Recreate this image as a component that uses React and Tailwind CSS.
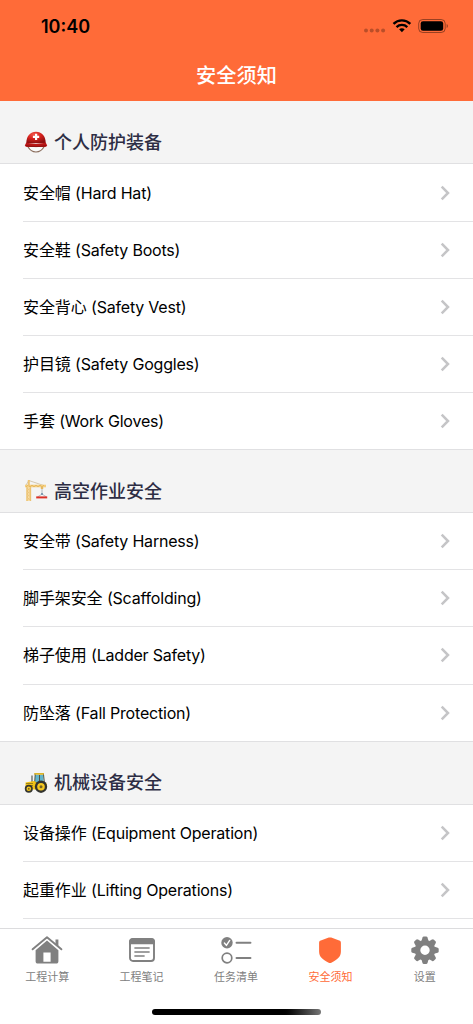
const sections = [
  {
    title: '个人防护装备',
    icon: HelmetIcon,
    items: [
      ['安全帽', '(Hard Hat)'],
      ['安全鞋', '(Safety Boots)'],
      ['安全背心', '(Safety Vest)'],
      ['护目镜', '(Safety Goggles)'],
      ['手套', '(Work Gloves)'],
    ],
  },
  {
    title: '高空作业安全',
    icon: CraneIcon,
    items: [
      ['安全带', '(Safety Harness)'],
      ['脚手架安全', '(Scaffolding)'],
      ['梯子使用', '(Ladder Safety)'],
      ['防坠落', '(Fall Protection)'],
    ],
  },
  {
    title: '机械设备安全',
    icon: TractorIcon,
    continues: true,
    items: [
      ['设备操作', '(Equipment Operation)'],
      ['起重作业', '(Lifting Operations)'],
    ],
  },
];

const tabs = [
  { label: '工程计算', icon: HomeIcon },
  { label: '工程笔记', icon: NoteIcon },
  { label: '任务清单', icon: ChecklistIcon },
  { label: '安全须知', icon: ShieldIcon, active: true },
  { label: '设置', icon: GearIcon },
];

function HelmetIcon() {
  return (
    <svg width="24" height="24" viewBox="0 0 24 24">
      <defs>
        <radialGradient id="helmet" cx="0.4" cy="0.25" r="0.75">
          <stop offset="0" stopColor="#f2564a" />
          <stop offset="0.5" stopColor="#d4201c" />
          <stop offset="1" stopColor="#8f0f10" />
        </radialGradient>
      </defs>
      <path d="M3.800 16.500C6 20.500 9 22 12 22s6-1.500 8.200-5.500" fill="#fafafa" stroke="#8a6d5c" strokeWidth="1.200" />
      <path d="M2.300 13C2.300 6 6.500 1.800 12 1.800S21.700 6 21.700 13z" fill="url(#helmet)" />
      <path d="M2.300 12.500C7 14 17 14 21.700 12.500L23.200 15.400C22.500 17 20 17 18 17H6C4 17 1.500 17 .8 15.400z" fill="#b81616" />
      <path d="M2 15.500C8 17 16 17 22 15.500" fill="none" stroke="#7d1010" strokeWidth=".7" />
      <path d="M11 3.800h2.200v2h2v2.100h-2v2.200H11V7.900H8.900V5.800H11z" fill="#fff" />
    </svg>
  );
}

function CraneIcon() {
  return (
    <svg width="24" height="24" viewBox="0 0 24 24">
      <path d="M2.500 6h4.500v16H2.500z" fill="#f8dfa8" />
      <g fill="none" stroke="#ecc272">
        <path d="M3 6v16M6.500 6v16" strokeWidth="1.300" />
        <path d="M3 9l3.500 3L3 15l3.500 3L3 21.500M6.500 9L3 12l3.500 3L3 18l3.500 3.500" strokeWidth=".7" />
        <path d="M4.800 1.500L1.500 7M4.800 1.500l15.500 5.200" strokeWidth=".7" stroke="#c5b592" />
      </g>
      <path d="M1 5.700h21v2.600H1z" fill="#f5cf7f" />
      <path d="M2 8l2-2 2 2 2-2 2 2 2-2 2 2 2-2 2 2 2-2" fill="none" stroke="#dba950" strokeWidth=".6" />
      <path d="M3.800 1h2v6h-2z" fill="#efc575" />
      <path d="M16.800 8h2.400v2h-2.400z" fill="#e4b85f" />
      <path d="M18 10v5m0 0l-4.500 3M18 15l4.500 3" fill="none" stroke="#a3adb5" strokeWidth=".8" />
      <path d="M17 14h2v2h-2z" fill="#829bb0" />
      <path d="M12.200 17.400h11v2h-11z" fill="#dc3027" />
    </svg>
  );
}

function TractorIcon() {
  return (
    <svg width="24" height="24" viewBox="0 0 24 24">
      <path d="M11 4h8.500v9H11z" fill="#62b4cb" />
      <path d="M10.200 2h9.800v1.800h-9.800z" fill="#d9b32a" />
      <path d="M11.200 3.500L10.500 13M19.500 3.500l1 9M15.500 4v8" fill="none" stroke="#4a4a32" strokeWidth=".9" />
      <path d="M8 4.500v7" stroke="#545b55" strokeWidth="1.200" />
      <path d="M1.500 11.500l8.500-1.500 4 2v6.500H1.500z" fill="#f1c315" />
      <path d="M11 14c1-4 9-5 12-1v3H11z" fill="#f8cb19" />
      <path d="M2 12.500h7M3 14.500h6" stroke="#84701e" strokeWidth=".8" />
      <circle cx="17" cy="15.700" r="6.200" fill="#32332f" />
      <circle cx="17" cy="15.700" r="3.800" fill="#f5c820" />
      <circle cx="17" cy="15.700" r="1.500" fill="#766323" />
      <circle cx="4.800" cy="17.800" r="4" fill="#353630" />
      <circle cx="4.800" cy="17.800" r="2.300" fill="#f2c51d" />
      <circle cx="4.800" cy="17.800" r=".9" fill="#655923" />
    </svg>
  );
}

function HomeIcon() {
  return (
    <svg width="32" height="30" viewBox="0 0 32 30" fill="none">
      <path d="M1.600 14.300L16 2.200l14.400 12.100" stroke="currentColor" strokeWidth="1.900" strokeLinecap="round" strokeLinejoin="round" />
      <path d="M24.500 4.500h2.900v7.200l-2.900-2.500z" fill="currentColor" />
      <path fillRule="evenodd" d="M4.600 15.200L16 5.600l11.400 9.600v11c0 1.500-.8 2.300-2.300 2.300H6.900c-1.500 0-2.300-.8-2.300-2.300zM12.400 17.500v9.200h7.200v-9.200z" fill="currentColor" />
    </svg>
  );
}

function NoteIcon() {
  return (
    <svg width="32" height="30" viewBox="0 0 32 30" fill="none">
      <rect x="4" y="4" width="24" height="22" rx="3" stroke="currentColor" strokeWidth="1.900" />
      <path d="M3.100 9.200V6.500c0-2.100 1.200-3.300 3.400-3.300h19c2.200 0 3.400 1.200 3.400 3.300v2.700z" fill="currentColor" />
      <path d="M8.900 13h14.200M8.900 17h14.200M8.900 21h9.200" stroke="currentColor" strokeWidth="1.500" strokeLinecap="round" />
    </svg>
  );
}

function ChecklistIcon() {
  return (
    <svg width="32" height="30" viewBox="0 0 32 30" fill="none">
      <circle cx="7" cy="7.800" r="5.700" fill="currentColor" />
      <path d="M4.400 8l2 2.400L9.700 5.400" stroke="#fff" strokeWidth="1.400" strokeLinecap="round" strokeLinejoin="round" />
      <circle cx="7" cy="23" r="4.800" stroke="currentColor" strokeWidth="1.700" />
      <path d="M16.500 7.800h14M16.500 23h14" stroke="currentColor" strokeWidth="1.900" strokeLinecap="round" />
    </svg>
  );
}

function ShieldIcon() {
  return (
    <svg width="32" height="30" viewBox="0 0 32 30">
      <path d="M14.800 2.600c.8-.3 1.600-.3 2.400 0l8 2.800c1.200.4 1.700 1.100 1.700 2.300v8.800c0 5-3.200 8-9.600 11.200-.9.500-1.700.5-2.600 0C8.300 24.500 5.100 21.500 5.100 16.500V7.700c0-1.200.5-1.900 1.700-2.300z" fill="currentColor" />
    </svg>
  );
}

function GearIcon() {
  return (
    <svg width="32" height="30" viewBox="0 0 32 30">
      <g fill="currentColor" transform="translate(16 15.200)">
        <path fillRule="evenodd" d="M0-10.200a10.200 10.200 0 1 0 0 20.400a10.200 10.200 0 1 0 0-20.400zM0-4.700a4.700 4.700 0 1 1 0 9.400a4.700 4.700 0 1 1 0-9.400z" />
        {[0, 45, 90, 135, 180, 225, 270, 315].map((a) => (
          <path key={a} transform={`rotate(${a})`} d="M-3.600-9l1.100-3.700q.3-1 1.300-1h2.400q1 0 1.300 1L3.600-9z" />
        ))}
      </g>
    </svg>
  );
}

function Chevron() {
  return (
    <svg width="10" height="16" viewBox="0 0 10 16" fill="none" className="shrink-0">
      <path d="M1.700 1.700L8 8l-6.300 6.300" stroke="#c5c5c7" strokeWidth="2.500" />
    </svg>
  );
}

function StatusBar() {
  return (
    <div className="flex h-[50px] items-center justify-between pt-[2px] pr-[24px] pl-[41px]">
      <span className="text-[18px] font-semibold text-black">10:40</span>
      <svg width="86" height="18" viewBox="0 0 86 18" fill="none">
        <g fill="#000" fillOpacity=".27">
          <circle cx="3" cy="13.500" r="2" />
          <circle cx="8.700" cy="13.500" r="2" />
          <circle cx="14.400" cy="13.500" r="2" />
          <circle cx="20.100" cy="13.500" r="2" />
        </g>
        <path d="M30.500 6.800c4.700-4.600 12.100-4.600 16.800 0" stroke="#000" strokeWidth="2.400" />
        <path d="M33.500 10.100c3-2.900 7.800-2.900 10.800 0" stroke="#000" strokeWidth="2.300" />
        <path d="M36.100 12.300c1.600-1.400 4-1.400 5.600 0l-2.800 2.900z" fill="#000" />
        <rect x="55.700" y="2.500" width="26.500" height="13" rx="4" stroke="#000" strokeOpacity=".4" />
        <rect x="57.700" y="4.300" width="22.500" height="9.500" rx="2.300" fill="#000" />
        <path d="M83.700 7v4c1.500-.6 1.500-3.400 0-4z" fill="#000" fillOpacity=".45" />
      </svg>
    </div>
  );
}

function Section({ title, icon: Icon, items, continues }) {
  return (
    <section>
      <h2 className="flex h-[63.3px] items-end gap-[6px] border-b border-[#e0e0e2] pb-[7.5px] pl-[24px] text-[18px] leading-[26px] font-medium text-[#2d2d44]">
        <span className="mb-[1.5px]">
          <Icon />
        </span>
        <span>{title}</span>
      </h2>
      <ul className={`bg-white ${continues ? 'pb-[12px]' : ''}`}>
        {items.map(([name, english], i) => {
          const last = i === items.length - 1 && !continues;
          return (
            <li key={name} className={last ? 'border-b border-[#e0e0e2] pl-[23px]' : 'pl-[23px]'}>
              <div
                className={`flex items-center justify-between pr-[23px] ${
                  last ? 'h-[56.1px]' : 'h-[57.1px] border-b border-[#e3e3e5]'
                }`}
              >
                <span className="text-[16px] leading-[24px] tracking-[-0.1px] whitespace-pre text-black">
                  {name} <span className="tracking-[-0.2px]">{english}</span>
                </span>
                <Chevron />
              </div>
            </li>
          );
        })}
      </ul>
    </section>
  );
}

export default function App() {
  return (
    <div className="flex h-[1024px] w-[473px] flex-col overflow-hidden bg-[#f4f4f4] font-['Inter','Noto_Sans_CJK_SC',sans-serif]">
      <header className="h-[101px] shrink-0 bg-[#ff6b38]">
        <StatusBar />
        <h1 className="flex h-[51px] items-center justify-center pt-[2px] text-[20.2px] font-medium text-white">安全须知</h1>
      </header>
      <main className="min-h-0 flex-1 overflow-hidden pt-[0.2px]">
        {sections.map((s) => (
          <Section key={s.title} {...s} />
        ))}
      </main>
      <footer className="flex h-[96px] shrink-0 flex-col items-center justify-between border-t border-[#dcdcde] bg-white pb-[9px]">
        <nav className="grid w-[472px] grid-cols-5 self-start">
          {tabs.map(({ label, icon: Icon, active }) => (
            <div
              key={label}
              className={`flex flex-col items-center pt-[6px] text-[11px] leading-[16px] ${
                active ? 'text-[#ff6b38]' : 'text-[#808080]'
              }`}
            >
              <Icon />
              <span className="mt-[4px]">{label}</span>
            </div>
          ))}
        </nav>
        <div className="h-[6px] w-[169px] rounded-full bg-linear-to-r from-black from-75% to-[#777777]" />
      </footer>
    </div>
  );
}
